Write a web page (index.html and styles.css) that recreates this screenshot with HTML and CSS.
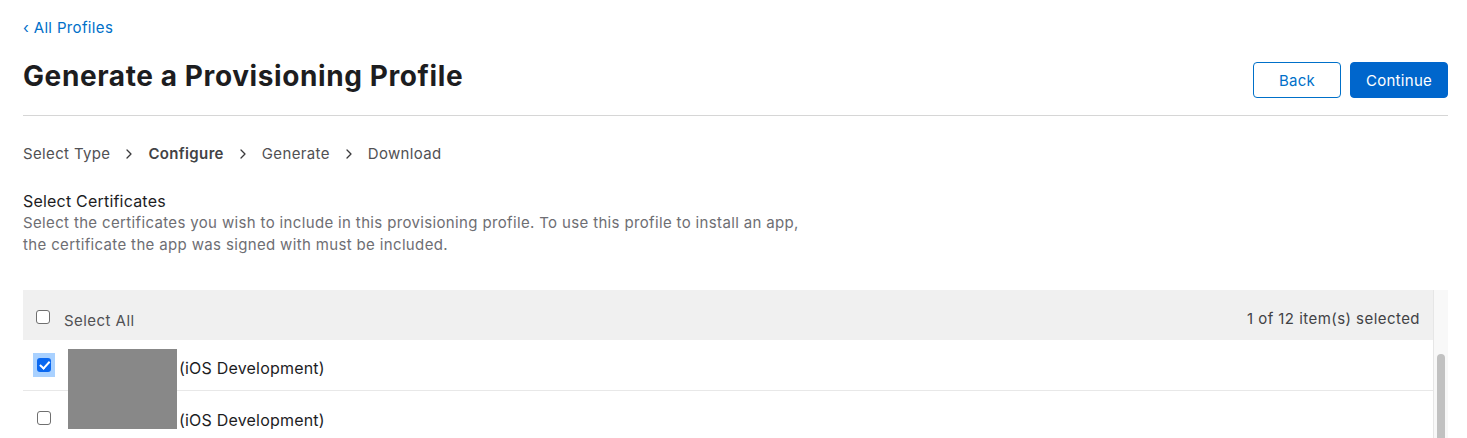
FILE: index.html
```html
<!DOCTYPE html>
<html lang="en">
<head>
    <meta charset="UTF-8">
    <title>Generate a Provisioning Profile</title>
    <link rel="stylesheet" href="styles.css">
</head>
<body>
    <div class="page">
        <a class="back-link" href="#">&#8249; All Profiles</a>

        <div class="head">
            <h1>Generate a Provisioning Profile</h1>
            <div class="actions">
                <button type="button" class="btn btn-outline">Back</button>
                <button type="button" class="btn btn-primary">Continue</button>
            </div>
        </div>

        <div class="steps">
            <span>Select Type</span>
            <svg class="sep" width="6" height="10" viewBox="0 0 6 10"><path d="M1 1l4 4-4 4" fill="none" stroke="#3a3a3c" stroke-width="1.3" stroke-linecap="round" stroke-linejoin="round"/></svg>
            <span class="current">Configure</span>
            <svg class="sep" width="6" height="10" viewBox="0 0 6 10"><path d="M1 1l4 4-4 4" fill="none" stroke="#3a3a3c" stroke-width="1.3" stroke-linecap="round" stroke-linejoin="round"/></svg>
            <span>Generate</span>
            <svg class="sep" width="6" height="10" viewBox="0 0 6 10"><path d="M1 1l4 4-4 4" fill="none" stroke="#3a3a3c" stroke-width="1.3" stroke-linecap="round" stroke-linejoin="round"/></svg>
            <span>Download</span>
        </div>

        <div class="intro">
            <h2>Select Certificates</h2>
            <p>Select the certificates you wish to include in this provisioning profile. To use this profile to install an app,<br>the certificate the app was signed with must be included.</p>
        </div>

        <div class="table-wrap">
            <div class="table">
                <div class="table-head">
                    <label class="check-label"><span class="box"></span>Select All</label>
                    <span class="count">1 of 12 item(s) selected</span>
                </div>
                <div class="rows">
                    <div class="row">
                        <span class="focus"><span class="box checked"></span></span>
                        <span class="cert-name">(iOS Development)</span>
                    </div>
                    <div class="row">
                        <span class="focus off"><span class="box"></span></span>
                        <span class="cert-name">(iOS Development)</span>
                    </div>
                    <!-- names are blacked out in the screenshot -->
                    <div class="redact"></div>
                </div>
            </div>
            <div class="scrollbar">
                <div class="thumb"></div>
            </div>
        </div>
    </div>
</body>
</html>
```

FILE: styles.css
```css
body{
    margin: 0;
    font-family: Inter, "Noto Sans", sans-serif;
    color: #1d1d1f;
    overflow: hidden;
}
.page{
    padding: 17px 19px 0 23px;
}
.back-link{
    display: inline-block;
    font-size: 15px;
    line-height: 20px;
    letter-spacing: 0.35px;
    color: #0070c9;
    text-decoration: none;
}
.head{
    display: flex;
    justify-content: space-between;
    align-items: flex-start;
    margin-top: 15px;
    padding-bottom: 17px;
    border-bottom: 1px solid #d6d6d6;
}
h1{
    margin: 3px 0 0;
    font-size: 28px;
    line-height: 40px;
    font-weight: 700;
    letter-spacing: 0.6px;
    color: #1d1d1f;
}
.actions{
    display: flex;
    gap: 9px;
    margin-top: 9px;
}
.btn{
    height: 36px;
    border-radius: 4px;
    font-family: inherit;
    font-size: 15px;
    letter-spacing: 0.3px;
    cursor: pointer;
}
.btn-outline{
    width: 88px;
    background: #fff;
    border: 1px solid #0070c9;
    color: #0070c9;
}
.btn-primary{
    width: 98px;
    background: #0066cc;
    border: 1px solid #0066cc;
    color: #fff;
}
.steps{
    display: flex;
    align-items: center;
    gap: 16px;
    margin-top: 28px;
    font-size: 15px;
    line-height: 20px;
    letter-spacing: 0.35px;
    color: #515154;
}
.steps .current{
    font-weight: 600;
    color: #424245;
}
.steps .sep{
    margin-top: -1px;
}
.intro{
    margin-top: 27px;
}
.intro h2{
    margin: 0;
    font-size: 16px;
    font-weight: 400;
    line-height: 20px;
    letter-spacing: 0.2px;
    color: #1d1d1f;
}
.intro p{
    margin: 1px 0 0;
    font-size: 15px;
    line-height: 22px;
    letter-spacing: 0.35px;
    color: #6e6e73;
}
.table-wrap{
    display: flex;
    margin-top: 34px;
    height: 160px;
}
.table{
    flex: 1;
}
.table-head{
    display: flex;
    justify-content: space-between;
    align-items: center;
    height: 50px;
    padding: 0 13px;
    background: #f0f0f0;
    font-size: 15px;
    letter-spacing: 0.45px;
    color: #515154;
}
.check-label{
    display: flex;
    align-items: center;
    gap: 14px;
    padding-top: 10px;
}
.count{
    padding-top: 6px;
    color: #424245;
}
.box{
    display: inline-block;
    width: 12px;
    height: 12px;
    border: 1.5px solid #6f6f6f;
    border-radius: 3px;
    background: #fff;
    margin-top: -6px;
}
.rows{
    position: relative;
}
.row{
    display: flex;
    align-items: center;
    height: 50px;
    padding-left: 10px;
    border-bottom: 1px solid #e8e8e8;
    font-size: 16px;
    letter-spacing: 0.2px;
    color: #1d1d1f;
}
.focus{
    display: flex;
    align-items: center;
    justify-content: center;
    width: 22px;
    height: 24px;
    background: #a9d1ff;
    margin-top: -1px;
}
.focus.off{
    background: none;
}
.focus .box{
    margin-top: 0;
}
.focus.off .box{
    margin-top: 4px;
}
.box.checked{
    width: 14px;
    height: 14px;
    border: 0;
    background: #0a68f0;
    position: relative;
}
.box.checked::after{
    content: "";
    position: absolute;
    left: 4.5px;
    top: 1.5px;
    width: 3.5px;
    height: 7.5px;
    border: solid #fff;
    border-width: 0 2.2px 2.2px 0;
    transform: rotate(42deg);
}
.cert-name{
    margin-left: 124px;
    padding-top: 6px;
}
.row + .row .cert-name{
    padding-top: 8px;
}
.redact{
    position: absolute;
    left: 45px;
    top: 9px;
    width: 109px;
    height: 80px;
    background: #888888;
}
.scrollbar{
    width: 14px;
    background: #f8f8f8;
    border-left: 1px solid #e6e6e6;
}
.thumb{
    width: 8px;
    height: 120px;
    margin: 64px 0 0 3px;
    border-radius: 4px;
    background: #c1c1c1;
}
```
